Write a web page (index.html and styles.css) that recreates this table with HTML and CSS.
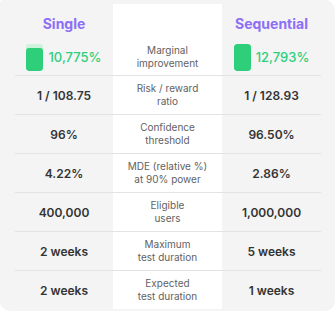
FILE: index.html
```html
<!DOCTYPE html>
<html>
<head>
<meta charset="utf-8">
<link rel="stylesheet" href="styles.css">
</head>
<body>
<div class="card">
  <div class="row head">
    <div class="cell title">Single</div>
    <div class="cell mid"></div>
    <div class="cell title">Sequential</div>
  </div>
  <div class="row first">
    <div class="cell"><span class="bar"><span class="fill" style="height:85%"></span></span><span class="pct">10,775%</span></div>
    <div class="cell mid">Marginal<br>improvement</div>
    <div class="cell"><span class="bar"><span class="fill" style="height:100%"></span></span><span class="pct">12,793%</span></div>
  </div>
  <div class="row">
    <div class="cell val">1 / 108.75</div>
    <div class="cell mid">Risk / reward<br>ratio</div>
    <div class="cell val">1 / 128.93</div>
  </div>
  <div class="row">
    <div class="cell val">96%</div>
    <div class="cell mid">Confidence<br>threshold</div>
    <div class="cell val">96.50%</div>
  </div>
  <div class="row">
    <div class="cell val">4.22%</div>
    <div class="cell mid">MDE (relative %)<br>at 90% power</div>
    <div class="cell val">2.86%</div>
  </div>
  <div class="row">
    <div class="cell val">400,000</div>
    <div class="cell mid">Eligible<br>users</div>
    <div class="cell val">1,000,000</div>
  </div>
  <div class="row">
    <div class="cell val">2 weeks</div>
    <div class="cell mid">Maximum<br>test duration</div>
    <div class="cell val">5 weeks</div>
  </div>
  <div class="row last">
    <div class="cell val">2 weeks</div>
    <div class="cell mid">Expected<br>test duration</div>
    <div class="cell val">1 weeks</div>
  </div>
</div>
</body>
</html>
```
FILE: styles.css
```css
* { box-sizing: border-box; }
html, body { margin: 0; padding: 0; background: #ffffff; }
body { font-family: Inter, "Noto Sans", sans-serif; }

.card {
  width: 335px;
  height: 311px;
  background: #f4f4f4;
  border-radius: 4px 10px 10px 10px;
  padding: 4px 0 3px 0;
}

.row {
  display: grid;
  grid-template-columns: 98px 109px 99px;
  margin: 0 14px 0 15px;
  height: 39px;
  border-bottom: 1px solid #e3e3e3;
}
.row.head { height: 35px; border-bottom: none; }
.row.first { height: 37px; }
.row.last { border-bottom: none; height: 38px; }

.cell {
  display: flex;
  align-items: center;
  justify-content: center;
  color: #333333;
}
.mid {
  background: #ffffff;
  font-size: 10px;
  line-height: 13px;
  color: #626262;
  text-align: center;
}
.title {
  font-size: 14px;
  font-weight: 700;
  color: #8d6ef7;
  padding-top: 3px;
}
.val {
  font-size: 12px;
  font-weight: 600;
  color: #333333;
}
.bar {
  width: 17px;
  height: 27px;
  border-radius: 3px;
  background: #cdf2dd;
  display: flex;
  flex-direction: column;
  justify-content: flex-end;
  overflow: hidden;
  margin-right: 5px;
}
.fill {
  display: block;
  width: 100%;
  background: #2ecf7b;
  border-radius: 3px;
}
.pct {
  font-size: 13px;
  font-weight: 500;
  color: #2ecf7b;
}
```
